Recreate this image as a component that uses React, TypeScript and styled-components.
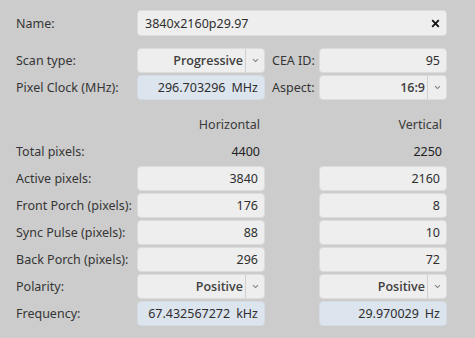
import React from "react";
import styled, { createGlobalStyle } from "styled-components";

const Global = createGlobalStyle`
  html, body { margin: 0; padding: 0; background: #cccccc; }
  body { font-family: "Noto Sans", "Open Sans", sans-serif; font-size: 12.5px; color: #333; }
`;

const Page = styled.div`
  width: 475px;
  height: 338px;
  box-sizing: border-box;
  padding: 10px 0 0 16px;
  display: flex;
  flex-direction: column;
  gap: 12px;
`;

const Section = styled.div`
  display: grid;
  grid-template-columns: 121px 128px 54px 128px;
  grid-auto-rows: 25px;
  row-gap: 2px;
`;

const NameSection = styled(Section)`
  grid-auto-rows: 26px;
`;

const Label = styled.div<{ $pad?: number }>`
  display: flex;
  align-items: center;
  padding-left: ${(p) => p.$pad ?? 0}px;
  color: #353535;
  white-space: nowrap;
`;

const Plain = styled.div`
  display: flex;
  align-items: center;
  justify-content: flex-end;
  padding-right: 5px;
  color: #222;
`;

const Header = styled(Plain)`
  color: #3a3a3a;
`;

const Field = styled.div<{ $calc?: boolean; $span?: number }>`
  grid-column: span ${(p) => p.$span ?? 1};
  display: flex;
  align-items: center;
  justify-content: flex-end;
  box-sizing: border-box;
  border: 1px solid ${(p) => (p.$calc ? "#d5dbe3" : "#dcdcdc")};
  border-radius: 4px;
  background: ${(p) => (p.$calc ? "#dce4ee" : "#eeeeee")};
  padding: 0 6px;
  color: #2e2e2e;
  gap: 6px;
`;

const NameField = styled(Field)`
  justify-content: space-between;
  padding: 0 6px 0 7px;
`;

const Unit = styled.span`
  color: #2e2e2e;
`;

const Select = styled.div`
  display: flex;
  box-sizing: border-box;
  border: 1px solid #dcdcdc;
  border-radius: 4px;
  background: #eeeeee;
  overflow: hidden;
`;

const SelectValue = styled.div`
  flex: 1;
  display: flex;
  align-items: center;
  justify-content: flex-end;
  padding-right: 2px;
  font-family: "Open Sans", "Noto Sans", sans-serif;
  font-weight: 600;
  color: #404040;
`;

const SelectButton = styled.div`
  width: 18px;
  border-left: 1px solid #cfcfcf;
  display: flex;
  align-items: center;
  justify-content: center;
`;

const Chevron = () => (
  <svg width="7" height="5" viewBox="0 0 7 5">
    <path d="M1 1.2 L3.5 3.6 L6 1.2" fill="none" stroke="#808080" strokeWidth="1.1" />
  </svg>
);

const Close = () => (
  <svg width="9" height="9" viewBox="0 0 9 9">
    <path d="M1.2 1.2 L7.8 7.8 M7.8 1.2 L1.2 7.8" stroke="#111" strokeWidth="1.8" />
  </svg>
);

const Gap = styled.div``;

const Dropdown = ({ value }: { value: string }) => (
  <Select>
    <SelectValue>{value}</SelectValue>
    <SelectButton>
      <Chevron />
    </SelectButton>
  </Select>
);

const rows: [string, string, string][] = [
  ["Active pixels:", "3840", "2160"],
  ["Front Porch (pixels):", "176", "8"],
  ["Sync Pulse (pixels):", "88", "10"],
  ["Back Porch (pixels):", "296", "72"],
];

export default function App() {
  return (
    <>
      <Global />
      <Page>
        <NameSection>
          <Label>Name:</Label>
          <NameField $span={3}>
            <span>3840x2160p29.97</span>
            <Close />
          </NameField>
        </NameSection>
        <Section>
          <Label>Scan type:</Label>
          <Dropdown value="Progressive" />
          <Label $pad={7}>CEA ID:</Label>
          <Field>95</Field>
          <Label>Pixel Clock (MHz):</Label>
          <Field $calc>
            <span>296.703296</span>
            <Unit>MHz</Unit>
          </Field>
          <Label $pad={7}>Aspect:</Label>
          <Dropdown value="16:9" />
        </Section>
        <Section>
          <Gap />
          <Header>Horizontal</Header>
          <Gap />
          <Header>Vertical</Header>
          <Label>Total pixels:</Label>
          <Plain>4400</Plain>
          <Gap />
          <Plain>2250</Plain>
          {rows.map(([l, h, v]) => (
            <React.Fragment key={l}>
              <Label>{l}</Label>
              <Field>{h}</Field>
              <Gap />
              <Field>{v}</Field>
            </React.Fragment>
          ))}
          <Label>Polarity:</Label>
          <Dropdown value="Positive" />
          <Gap />
          <Dropdown value="Positive" />
          <Label>Frequency:</Label>
          <Field $calc>
            <span>67.432567272</span>
            <Unit>kHz</Unit>
          </Field>
          <Gap />
          <Field $calc>
            <span>29.970029</span>
            <Unit>Hz</Unit>
          </Field>
        </Section>
      </Page>
    </>
  );
}
